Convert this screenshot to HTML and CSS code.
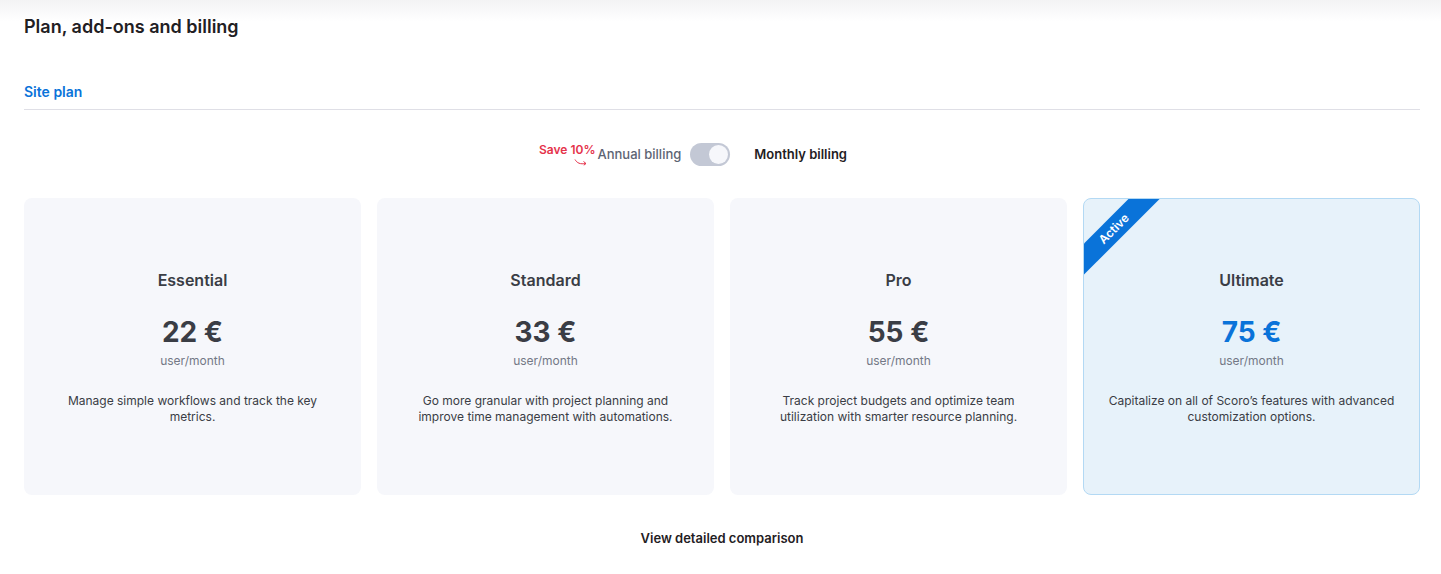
FILE: index.html
```html
<!DOCTYPE html>
<html lang="en">
<head>
    <meta charset="UTF-8">
    <title>Plan, add-ons and billing</title>
    <link rel="stylesheet" href="styles.css">
</head>
<body>
    <div class="page">
        <h1>Plan, add-ons and billing</h1>

        <div class="tabs">
            <a class="tab active" href="#">Site plan</a>
        </div>

        <!-- Billing period switch -->
        <div class="billing">
            <div class="save">
                <span>Save 10%</span>
                <svg width="14" height="8" viewBox="0 0 14 8"><path d="M1 1.5 C3 5, 6 6.5, 12 5.5 M9.5 3.5 L12 5.5 L9.8 7.2" fill="none" stroke="#e5334b" stroke-width="1"/></svg>
            </div>
            <span class="period">Annual billing</span>
            <span class="switch"><span class="knob"></span></span>
            <span class="period current">Monthly billing</span>
        </div>

        <!-- Plans -->
        <div class="plans">
            <div class="plan">
                <h3>Essential</h3>
                <div class="price">22 €</div>
                <div class="unit">user/month</div>
                <p>Manage simple workflows and track the key metrics.</p>
            </div>
            <div class="plan">
                <h3>Standard</h3>
                <div class="price">33 €</div>
                <div class="unit">user/month</div>
                <p>Go more granular with project planning and improve time management with automations.</p>
            </div>
            <div class="plan">
                <h3>Pro</h3>
                <div class="price">55 €</div>
                <div class="unit">user/month</div>
                <p>Track project budgets and optimize team utilization with smarter resource planning.</p>
            </div>
            <div class="plan active">
                <div class="ribbon">Active</div>
                <h3>Ultimate</h3>
                <div class="price">75 €</div>
                <div class="unit">user/month</div>
                <p>Capitalize on all of Scoro’s features with advanced customization options.</p>
            </div>
        </div>

        <div class="compare"><a href="#">View detailed comparison</a></div>
    </div>
</body>
</html>
```

FILE: styles.css
```css
body {
    margin: 0;
    font-family: 'Inter', 'Noto Sans', sans-serif;
    color: #1f2023;
    background: #fff;
}
.page {
    padding: 15px 21px 0 24px;
    height: 559px;
    background: linear-gradient(#f3f3f4, #fff 22px);
}
h1 {
    margin: 0;
    font-size: 18px;
    line-height: 24px;
    font-weight: 600;
}
.tabs {
    margin-top: 43px;
    border-bottom: 1px solid #dfdfe6;
    display: flex;
}
.tab {
    font-size: 14px;
    line-height: 20px;
    font-weight: 600;
    color: #0a73d9;
    text-decoration: none;
    padding-bottom: 7px;
}
.billing {
    display: flex;
    justify-content: center;
    align-items: center;
    margin-top: 32px;
    height: 24px;
    padding-right: 58px;
}
.save {
    display: flex;
    flex-direction: column;
    align-items: flex-end;
    color: #e5334b;
    font-size: 12px;
    font-weight: 600;
    margin-top: 1px;
    margin-right: 2px;
}
.save span {
    line-height: 14px;
}
.save svg {
    margin: 1px 7px 0 0;
}
.period {
    font-size: 13px;
    font-weight: 500;
    color: #5d6473;
}
.period.current {
    color: #1f2023;
    font-weight: 600;
}
.switch {
    width: 40px;
    height: 23px;
    border-radius: 12px;
    background: #c3c8d5;
    margin: 0 24px 0 9px;
    display: flex;
    align-items: center;
    justify-content: flex-end;
    padding: 0 2px;
    box-sizing: border-box;
}
.knob {
    width: 19px;
    height: 19px;
    border-radius: 50%;
    background: #f6f7fb;
}
.plans {
    display: grid;
    grid-template-columns: repeat(4, 1fr);
    gap: 16px;
    margin-top: 32px;
}
.plan {
    position: relative;
    overflow: hidden;
    height: 297px;
    box-sizing: border-box;
    background: #f6f7fb;
    border-radius: 8px;
    text-align: center;
    padding: 71px 25px 0;
}
.plan.active {
    background: #e7f2fa;
    border: 1px solid #b3d9f4;
    padding: 70px 24px 0;
}
.plan h3 {
    margin: 0;
    font-size: 16px;
    line-height: 22px;
    font-weight: 600;
    color: #3a3d45;
}
.price {
    margin-top: 24px;
    font-size: 28px;
    line-height: 34px;
    font-weight: 700;
    color: #3a3d45;
}
.plan.active .price {
    color: #0a73d9;
}
.unit {
    font-size: 12px;
    line-height: 18px;
    color: #737886;
    margin-top: 3px;
}
.plan p {
    margin: 23px 0 0;
    font-size: 12px;
    line-height: 16px;
    color: #3a3d45;
}
.ribbon {
    position: absolute;
    left: -30px;
    top: 19px;
    width: 120px;
    height: 22px;
    line-height: 22px;
    background: #0a73d9;
    color: #fff;
    font-size: 12px;
    font-weight: 600;
    transform: rotate(-45deg);
}
.compare {
    text-align: center;
    margin-top: 32px;
}
.compare a {
    font-size: 13px;
    font-weight: 600;
    color: #1f2023;
    text-decoration: none;
}
```
